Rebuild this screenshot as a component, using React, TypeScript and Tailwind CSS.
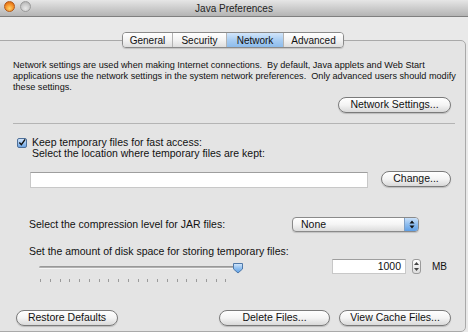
import React from "react";

function Btn({ className, children }: { className: string; children: React.ReactNode }) {
  return (
    <div
      className={
        "h-[16px] rounded-full border border-[#7a7a7a] bg-linear-to-b from-white via-[#f4f4f4] to-[#d9d9d9] flex items-center justify-center text-[10.5px] text-[#111] shadow-[0_1px_1px_rgba(0,0,0,0.18)] whitespace-nowrap " +
        className
      }
    >
      {children}
    </div>
  );
}

function Tab({ label, w, active, last }: { label: string; w: string; active?: boolean; last?: boolean }) {
  return (
    <div
      className={
        "h-full flex items-center justify-center text-[10px] text-[#111] " +
        w +
        (last ? "" : " border-r border-[#b3b3b3]") +
        (active
          ? " bg-linear-to-b from-[#d3e6fa] via-[#a9cdf2] to-[#8dbcec]"
          : " bg-linear-to-b from-white via-[#f3f3f3] to-[#dedede]")
      }
    >
      {label}
    </div>
  );
}

function Slider() {
  const ticks = Array.from({ length: 20 }, (_, i) => i);
  return (
    <div className="relative w-[206px] h-[24px]">
      <div className="absolute left-0 top-[7px] w-[200px] h-[3px] rounded-full bg-linear-to-b from-[#8c8c8c] to-[#bdbdbd] border-b border-[#f4f4f4]" />
      {ticks.map((i) => (
        <div
          key={i}
          className="absolute top-[20px] w-px h-[3px] bg-[#9a9a9a]"
          style={{ left: 1 + i * 9.75 }}
        />
      ))}
      <svg className="absolute left-[193px] top-[3px]" width="12" height="12" viewBox="0 0 12 12">
        <defs>
          <linearGradient id="th" x1="0" y1="0" x2="0" y2="1">
            <stop offset="0" stopColor="#d6e8fb" />
            <stop offset="0.5" stopColor="#8fbff0" />
            <stop offset="1" stopColor="#5e9ee3" />
          </linearGradient>
        </defs>
        <path d="M1.5 1.5 H10.5 V7 L6 11 L1.5 7 Z" fill="url(#th)" stroke="#4f78a8" strokeWidth="1" strokeLinejoin="round" />
      </svg>
    </div>
  );
}

export default function App() {
  return (
    <div className="w-[468px] h-[332px] overflow-hidden bg-[#e9e9e9] font-['Liberation_Sans',Arial,sans-serif] text-[#111] flex flex-col">
      {/* title bar */}
      <div className="relative h-[17px] shrink-0 bg-linear-to-b from-[#e6e6e6] to-[#b4b4b4] border-b border-[#7f7f7f] flex items-center justify-center">
        <div className="absolute left-[4px] top-[1px] flex gap-[5px]">
          <div className="w-[11px] h-[11px] rounded-full bg-[radial-gradient(circle_at_50%_70%,#ffd36a,#f2861f_60%,#c45a10)] border border-[#b25a1a]" />
          <div className="w-[11px] h-[11px] rounded-full bg-[radial-gradient(circle_at_50%_70%,#e8e8e8,#c6c6c6_60%,#a5a5a5)] border border-[#9b9b9b]" />
        </div>
        <span className="text-[10px] text-[#222]">Java Preferences</span>
      </div>

      {/* tabs */}
      <div className="relative z-10 mt-[15px] flex justify-start pl-[122px]">
        <div className="h-[16px] flex rounded-[4px] border border-[#8a8a8a] overflow-hidden shadow-[0_1px_1px_rgba(0,0,0,0.15)]">
          <Tab label="General" w="w-[50px]" />
          <Tab label="Security" w="w-[54px]" />
          <Tab label="Network" w="w-[57px]" active />
          <Tab label="Advanced" w="w-[59px]" last />
        </div>
      </div>

      {/* box */}
      <div className="-mt-[8px] -ml-[6px] w-[472px] flex-1 rounded-[5px] border border-[#a9a9a9] bg-[#e4e4e4] pt-[19px] pl-[18px] pr-[14px] flex flex-col">
        <p className="text-[9.15px] leading-[11px] text-[#111] whitespace-nowrap">
          Network settings are used when making Internet connections.&nbsp; By default, Java applets and Web Start
          <br />
          applications use the network settings in the system network preferences.&nbsp; Only advanced users should modify
          <br />
          these settings.
        </p>
        <div className="mt-[4px] flex justify-end">
          <Btn className="w-[113px]">Network Settings...</Btn>
        </div>
        <div className="mt-[10px] h-px bg-[#b4b4b4] -mr-[4px]" />

        <div className="mt-[13px] h-[11px] flex items-center pl-[4px] gap-[5px]">
          <div className="w-[10px] h-[10px] rounded-[2px] border border-[#4d6f99] bg-linear-to-b from-[#cfe3f9] to-[#6fa6e4] flex items-center justify-center">
            <svg width="9" height="9" viewBox="0 0 9 9">
              <path d="M1.5 4.5 L3.8 7 L8 1" fill="none" stroke="#111" strokeWidth="1.6" />
            </svg>
          </div>
          <span className="text-[10.5px]">Keep temporary files for fast access:</span>
        </div>
        <div className="h-[11px] flex items-center pl-[19px] text-[10.5px]">Select the location where temporary files are kept:</div>

        <div className="mt-[12px] flex items-start">
          <div className="ml-[17px] mt-[1px] w-[338px] h-[16px] bg-white border border-[#c8c8c8] border-t-[#9e9e9e]" />
          <div className="flex-1" />
          <Btn className="w-[70px]">Change...</Btn>
        </div>

        <div className="mt-[29px] h-[15px] flex items-center">
          <span className="pl-[16px] text-[10.5px] flex-1">Select the compression level for JAR files:</span>
          <div className="mr-[32px] w-[127px] h-[15px] rounded-[4px] border border-[#8a8a8a] bg-linear-to-b from-white via-[#f4f4f4] to-[#dcdcdc] flex overflow-hidden shadow-[0_1px_1px_rgba(0,0,0,0.15)]">
            <span className="flex-1 pl-[8px] text-[10.5px] leading-[13px]">None</span>
            <div className="w-[14px] h-full bg-linear-to-b from-[#c9e0f9] via-[#8dbcee] to-[#5f9fe6] border-l border-[#7f9fc4] flex items-center justify-center">
              <svg width="6" height="9" viewBox="0 0 6 9">
                <path d="M3 0.5 L5.5 3.5 H0.5 Z M3 8.5 L5.5 5.5 H0.5 Z" fill="#111" />
              </svg>
            </div>
          </div>
        </div>

        <div className="mt-[14px] h-[12px] flex items-center pl-[16px] text-[10.5px]">
          Set the amount of disk space for storing temporary files:
        </div>

        <div className="mt-[1px] flex items-start">
          <div className="ml-[26px]">
            <Slider />
          </div>
          <div className="flex-1" />
          <div className="w-[74px] h-[15px] bg-white border border-[#c8c8c8] border-t-[#9e9e9e] text-[10.5px] leading-[13px] text-right pr-[4px]">
            1000
          </div>
          <div className="ml-[6px] w-[9px] h-[15px] rounded-[3px] border border-[#9a9a9a] bg-linear-to-b from-white to-[#dcdcdc] flex flex-col items-center justify-center gap-[3px]">
            <svg width="5" height="3" viewBox="0 0 5 3"><path d="M2.5 0 L5 3 H0 Z" fill="#444" /></svg>
            <svg width="5" height="3" viewBox="0 0 5 3"><path d="M2.5 3 L5 0 H0 Z" fill="#444" /></svg>
          </div>
          <span className="ml-[11px] mr-[4px] text-[10px] leading-[15px]">MB</span>
        </div>

        <div className="mt-[27px] flex items-center">
          <Btn className="ml-[3px] w-[102px]">Restore Defaults</Btn>
          <div className="flex-1" />
          <Btn className="w-[111px]">Delete Files...</Btn>
          <Btn className="ml-[9px] w-[112px]">View Cache Files...</Btn>
        </div>
      </div>
    </div>
  );
}
